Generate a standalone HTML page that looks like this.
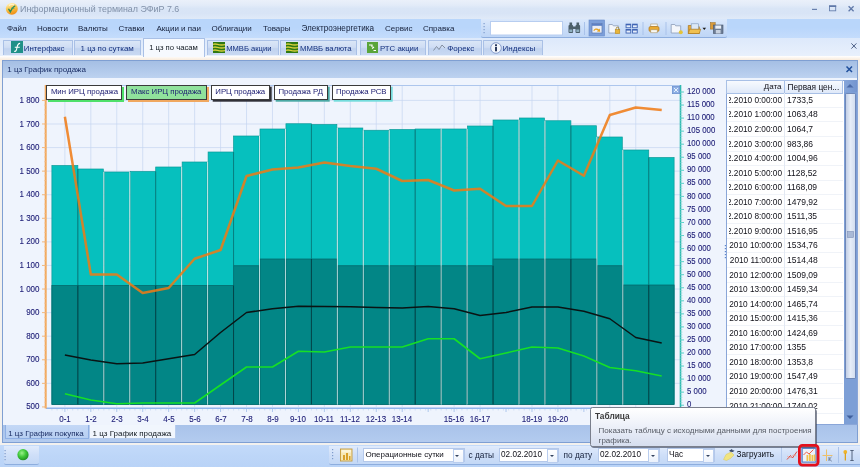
<!DOCTYPE html>
<html><head><meta charset="utf-8">
<style>
html,body{margin:0;padding:0;}
body{width:860px;height:467px;overflow:hidden;position:relative;background:#dbe7f8;font-family:"Liberation Sans",sans-serif;font-size:8px;color:#1a1a2a;}
div{position:absolute;box-sizing:border-box;white-space:nowrap;}
#title{left:0;top:0;width:860px;height:19px;background:linear-gradient(#eaf0fa 0%,#e2ebf8 28%,#d9e5f6 45%,#d8e4f6 70%,#e0eaf8 100%);}
#ttxt{left:20px;top:3.5px;font-size:8.9px;color:#8090a8;line-height:11px;}
#menu{left:0;top:19px;width:860px;height:19px;background:linear-gradient(#b9d6fb 0%,#b9d6fb 45%,#c4dcfc 100%);}
.mi{top:23.5px;font-size:8px;line-height:10px;color:#15203a;}
#tabs{left:0;top:38px;width:860px;height:18px;background:linear-gradient(#dde9fb,#e8f0fc);}
.tab{top:39.9px;height:15.6px;border:1px solid #a9c0e6;border-bottom:none;background:linear-gradient(#dae6f7 0%,#cfddf4 45%,#c1d3ef 55%,#c9d9f2 100%);border-radius:1px 1px 0 0;}
.tab span{position:absolute;top:2.8px;font-size:8px;line-height:10px;color:#15317e;}
.tab.act{top:38px;height:19px;background:#f6f9fe;border-color:#a9c0e6;z-index:3}
.tab.act span{color:#101820;top:4.2px;font-size:7.7px}
#tline{left:0;top:55.5px;width:860px;height:1px;background:#9fbbe4;}
#cream{left:0;top:56.3px;width:860px;height:389px;background:linear-gradient(#ffffff 0,#f9ede0 3.5px,#f3f1ee 6px);}
#panel{left:2px;top:59.5px;width:856px;height:383px;border:1px solid #7f9fd2;background:#eef4fd;}
#phead{left:3px;top:60.5px;width:854px;height:17.3px;background:linear-gradient(#a5bfe4 0%,#b0c8ea 50%,#bdd2f0 100%);}
#phead span{position:absolute;left:4.3px;top:4px;font-size:8px;line-height:10px;color:#1c2f66;}
#chartbg{left:3px;top:77.5px;width:722px;height:347px;background:#eff4fd;}
.yl{left:0;width:39.5px;text-align:right;font-size:8.8px;line-height:11px;color:#1a1a74;transform:scaleX(.91);transform-origin:100% 50%;-webkit-text-stroke:0.1px #1a1a74}
.yr{left:686.5px;font-size:8.8px;line-height:11px;color:#1a1a74;transform:scaleX(.89);transform-origin:0 50%;-webkit-text-stroke:0.1px #1a1a74}
.xl{top:413.5px;width:30px;text-align:center;font-size:8.8px;line-height:11px;color:#1a1a74;transform:scaleX(.91);-webkit-text-stroke:0.1px #1a1a74}
.lg{top:85px;height:14.6px;border:1px solid #3a3a3a;border-top-width:1.3px;border-left-width:1.3px;background:#fff;font-size:7.8px;line-height:12px;color:#1a1a70;text-align:center;}
#tblwrap{left:726px;top:79.5px;width:131.5px;height:345px;background:#fff;border:1px solid #8aa6d8;overflow:hidden;}
#thead{left:0;top:0;width:115px;height:13.5px;background:linear-gradient(#f4f8fe,#dbe7f8);border-bottom:1px solid #a8c0e6;}
.tr{left:727px;width:116px;height:14.5px;border-bottom:1px solid #f0f3f8;font-size:8px;line-height:13px;color:#101018;overflow:hidden;}
.c1{left:1.5px;top:0.5px;width:53.5px;overflow:hidden;height:14px;font-size:8.25px}
.c1 span{position:absolute;right:0;top:0}
.c2{left:60px;top:0.5px;font-size:8.5px}
.combo{top:448px;height:14px;background:#fff;border:1px solid #b4c8ea;font-size:8.2px;line-height:12px;color:#101018;}
.combo span{position:absolute;left:1.5px;top:0}
.combo i{position:absolute;right:0;top:0;width:9px;height:12px;background:linear-gradient(#ffffff,#eaf1fc);border:1px solid #b9cdee;}
.combo i:after{content:"";position:absolute;left:1.5px;top:4.5px;border:2px solid transparent;border-top:2.5px solid #33435f;}
.lbl{top:450px;font-size:8.3px;line-height:10px;color:#15203a;}
#w{left:0;top:0;width:860px;height:467px;will-change:transform;overflow:hidden}
</style></head><body>
<div id="w">
<!-- title -->
<div id="title"></div>
<svg style="position:absolute;left:5px;top:1.5px" width="14" height="14" viewBox="0 0 14 14"><defs><linearGradient id="og" x1="0.3" y1="0" x2="0.6" y2="1"><stop offset="0" stop-color="#fff4cc"/><stop offset="0.45" stop-color="#f9c64a"/><stop offset="1" stop-color="#ef8a10"/></linearGradient></defs><circle cx="6.8" cy="6.8" r="6" fill="url(#og)"/><path d="M3.8 7.300l1.600 2.400c1.200-2.600 2.200-4.800 4.400-5.600" stroke="#2a8a5a" stroke-width="1.400" fill="none" stroke-linecap="round"/><path d="M6.200 6.200h3.200" stroke="#3a9a6a" stroke-width="0.900"/><path d="M4 3.600c1.500-1.300 3.500-1.500 5-.8" stroke="#fffbe8" stroke-width="1" fill="none" opacity="0.800"/></svg>
<div id="ttxt">Информационный терминал ЭФиР 7.6</div>
<svg style="position:absolute;left:806px;top:2px" width="52" height="14" viewBox="0 0 52 14"><path d="M6 7.4h5" stroke="#6880ae" stroke-width="1.2"/><rect x="23.5" y="4" width="6.2" height="4.8" fill="none" stroke="#6880ae" stroke-width="0.9"/><rect x="23" y="3.4" width="7.2" height="1.6" fill="#5f78a8"/><path d="M42.6 4.2l5 5M47.6 4.2l-5 5" stroke="#5f78a8" stroke-width="1.25"/></svg>
<!-- menu -->
<div id="menu"></div>
<div class="mi" style="left:7px">Файл</div>
<div class="mi" style="left:37px">Новости</div>
<div class="mi" style="left:78px">Валюты</div>
<div class="mi" style="left:118.5px">Ставки</div>
<div class="mi" style="left:156.5px">Акции и паи</div>
<div class="mi" style="left:211.5px">Облигации</div>
<div class="mi" style="left:263px">Товары</div>
<div class="mi" style="left:301.5px;font-size:8.15px">Электроэнергетика</div>
<div class="mi" style="left:385px">Сервис</div>
<div class="mi" style="left:423px">Справка</div>
<!-- toolbar -->
<div style="left:481px;top:19px;width:246px;height:18.5px;background:linear-gradient(#dbe8fb,#c8dcf8 60%,#bfd6f6);border-bottom:1px solid #8eaede;border-radius:0 0 2px 2px"></div>
<svg style="position:absolute;left:481px;top:19px" width="246" height="19" viewBox="0 0 246 19">
<g fill="#7f9ccc"><rect x="2.5" y="4" width="1.2" height="1.2"/><rect x="2.5" y="7" width="1.2" height="1.2"/><rect x="2.5" y="10" width="1.2" height="1.2"/><rect x="2.5" y="13" width="1.2" height="1.2"/></g>
<rect x="9.5" y="2.5" width="72" height="13.5" fill="#fff" stroke="#b7cdf0" stroke-width="1"/>
<!-- binoculars -->
<g fill="#4c5f6a"><rect x="87.5" y="6" width="4.6" height="8" rx="1"/><rect x="94.5" y="6" width="4.6" height="8" rx="1"/><rect x="88.5" y="3.5" width="2.6" height="3"/><rect x="95.5" y="3.5" width="2.6" height="3"/><rect x="91.5" y="7.5" width="3.5" height="2.5"/></g>
<rect x="88.3" y="10.5" width="3" height="2.5" fill="#8fb0c0"/><rect x="95.3" y="10.5" width="3" height="2.5" fill="#8fb0c0"/>
<path d="M103.5 3v13" stroke="#a9c2ea" stroke-width="1"/>
<!-- active btn -->
<rect x="108" y="1" width="15.6" height="16" fill="#7c9fda" stroke="#6a8cc8" stroke-width="0.6"/>
<rect x="111" y="4.6" width="10" height="9.4" fill="#e9eef8" stroke="#5d78b0" stroke-width="0.7"/><rect x="111" y="4.6" width="10" height="2.2" fill="#5b7fc4"/>
<path d="M112.3 11.4c1.200-2.400 4.300-2.600 5.600-.9l.9-1.100.4 3.300-3.300-.2 1-.9c-1.100-1.300-3-.9-3.600.4z" fill="#e6a21e"/>
<!-- folder lock -->
<path d="M127.800 5.500h3.600l.9 1.300h5v7.200h-9.500z" fill="#f3f6fb" stroke="#8c9cb8" stroke-width="0.800"/><rect x="134.200" y="10.600" width="4.600" height="4" fill="#e8b53a" stroke="#b78614" stroke-width="0.500"/><path d="M135.200 10.600v-1.100a1.300 1.300 0 0 1 2.600 0v1.100" stroke="#9a7a20" stroke-width="0.800" fill="none"/>
<!-- grid -->
<g fill="#3f64b4"><rect x="144.600" y="4.700" width="5.600" height="4.500"/><rect x="151.100" y="4.700" width="5.600" height="4.500"/><rect x="144.600" y="10" width="5.600" height="4.500"/><rect x="151.100" y="10" width="5.600" height="4.500"/></g>
<g fill="#e5edfa"><rect x="145.500" y="6.300" width="3.800" height="2"/><rect x="152" y="6.300" width="3.800" height="2"/><rect x="145.500" y="11.600" width="3.800" height="2"/><rect x="152" y="11.600" width="3.800" height="2"/></g>
<path d="M162 3v13" stroke="#a9c2ea" stroke-width="1"/>
<!-- printer -->
<rect x="169.800" y="5" width="6.400" height="3" fill="#f8f8f4" stroke="#a8946a" stroke-width="0.600"/><rect x="168" y="7.500" width="10" height="5" rx="1.500" fill="#e9aa32" stroke="#b0761a" stroke-width="0.700"/><rect x="169.800" y="10.800" width="6.400" height="3" fill="#f8f8f4" stroke="#a8946a" stroke-width="0.600"/>
<path d="M185 3v13" stroke="#a9c2ea" stroke-width="1"/>
<!-- new folder -->
<path d="M190.200 5.500h3.600l.9 1.300h5v7.200h-9.500z" fill="#f3f6fb" stroke="#8c9cb8" stroke-width="0.800"/><circle cx="199.800" cy="13.200" r="2" fill="#e4c43a"/>
<!-- open folder img -->
<path d="M207.300 6.500h3.600l.9 1.300h6.500v6.700h-11z" fill="#e6a93a" stroke="#a8741a" stroke-width="0.700"/><rect x="210.200" y="4.800" width="7.200" height="5.800" fill="#dce8f6" stroke="#7f96b8" stroke-width="0.600"/><path d="M207.300 14.500l1.400-4.300h11l-1.400 4.300z" fill="#f0c050" stroke="#a8741a" stroke-width="0.600"/>
<path d="M221.500 8.800h3.600l-1.800 2.200z" fill="#1a1a1a"/>
<!-- save copy -->
<rect x="229.400" y="3.600" width="4.800" height="6.500" fill="#d89a3a" stroke="#9a6a1a" stroke-width="0.500"/><rect x="232.400" y="6" width="9.600" height="8.500" fill="#6e7e96" stroke="#48566c" stroke-width="0.600"/><rect x="234.300" y="6.500" width="5.800" height="3.200" fill="#e8eef6"/><rect x="234.800" y="11" width="4.800" height="3.500" fill="#c8d2e0"/>
</svg>
<!-- tabs -->
<div id="tabs"></div>
<div id="tline"></div>
<div class="tab" style="left:3px;width:69.500px"><svg style="position:absolute;left:7px;top:0.2px" width="12" height="12" viewBox="0 0 12 12"><rect width="12" height="12" fill="#1f9088"/><path d="M3.200 10.200c1.800.6 2.300-1 2.700-3.200s.9-4.600 3.200-4.600M3.800 6.200h5" stroke="#fff" stroke-width="1.100" fill="none"/></svg><span style="left:19.8px;font-size:7.9px">Интерфакс</span></div>
<div class="tab" style="left:74px;width:66.500px"><span style="left:5.5px">1 цз по суткам</span></div>
<div class="tab act" style="left:143px;width:61.500px;top:38px"><span style="left:5.2px">1 цз по часам</span></div>
<div class="tab" style="left:206.500px;width:72px"><svg style="position:absolute;left:5px;top:1.500px" width="12" height="11" viewBox="0 0 12 11"><rect width="12" height="11" fill="#2f7814"/><path d="M0 2.500c3-2 6 2 12 0M0 5.500c3-2 6 2 12 0M0 8.500c3-2 6 2 12 0" stroke="#d6cf3c" stroke-width="1.300" fill="none"/></svg><span style="left:18.7px;font-size:7.6px">ММВБ акции</span></div>
<div class="tab" style="left:280.3px;width:76.7px"><svg style="position:absolute;left:4.7px;top:1.500px" width="12" height="11" viewBox="0 0 12 11"><rect width="12" height="11" fill="#2f7814"/><path d="M0 2.500c3-2 6 2 12 0M0 5.500c3-2 6 2 12 0M0 8.500c3-2 6 2 12 0" stroke="#d6cf3c" stroke-width="1.300" fill="none"/></svg><span style="left:18.7px;font-size:7.75px">ММВБ валюта</span></div>
<div class="tab" style="left:360px;width:66px"><svg style="position:absolute;left:5.500px;top:1.500px" width="11" height="11" viewBox="0 0 11 11"><rect width="11" height="11" fill="#5aa53a"/><path d="M2 3h3v2M5 6.500l2-1.500M6.500 8.500h2.500" stroke="#fff" stroke-width="1.200" fill="none"/></svg><span style="left:19px;font-size:7.8px">РТС акции</span></div>
<div class="tab" style="left:428px;width:53.5px"><svg style="position:absolute;left:4px;top:3px" width="13" height="8" viewBox="0 0 13 8"><path d="M0.500 6.500l3-4 2.500 3 3-4.500 3 3" stroke="#7a8696" stroke-width="0.900" fill="none"/></svg><span style="left:18.2px">Форекс</span></div>
<div class="tab" style="left:483px;width:60px"><svg style="position:absolute;left:6px;top:1px" width="12" height="12" viewBox="0 0 12 12"><circle cx="6" cy="6" r="5.300" fill="#f4f7fc" stroke="#7f97c8" stroke-width="0.900"/><rect x="5.100" y="4.800" width="1.800" height="4.500" fill="#16264e"/><rect x="5.100" y="2.300" width="1.800" height="1.700" fill="#16264e"/></svg><span style="left:18.6px">Индексы</span></div>
<svg style="position:absolute;left:850px;top:42px" width="8" height="8" viewBox="0 0 8 8"><path d="M1.4 1.4l5 5.2M6.4 1.4L1.4 6.600" stroke="#4c5f86" stroke-width="1"/></svg>
<!-- panel -->
<div id="cream"></div>
<div id="panel"></div>
<div id="phead"><span>1 цз График продажа</span></div>
<svg style="position:absolute;left:845px;top:65px" width="9" height="9" viewBox="0 0 9 9"><path d="M1.500 1.500l5.500 5.500M7 1.500L1.500 7" stroke="#1f4f9c" stroke-width="1.500"/></svg>
<div id="chartbg"></div>
<svg width="860" height="467" viewBox="0 0 860 467" style="position:absolute;left:0;top:0">
<line x1="46" x2="680" y1="100.40" y2="100.40" stroke="#c6d5f1" stroke-width="0.7"/>
<line x1="46" x2="680" y1="123.98" y2="123.98" stroke="#c6d5f1" stroke-width="0.7"/>
<line x1="46" x2="680" y1="147.56" y2="147.56" stroke="#c6d5f1" stroke-width="0.7"/>
<line x1="46" x2="680" y1="171.14" y2="171.14" stroke="#c6d5f1" stroke-width="0.7"/>
<line x1="46" x2="680" y1="194.72" y2="194.72" stroke="#c6d5f1" stroke-width="0.7"/>
<line x1="46" x2="680" y1="218.30" y2="218.30" stroke="#c6d5f1" stroke-width="0.7"/>
<line x1="46" x2="680" y1="241.88" y2="241.88" stroke="#c6d5f1" stroke-width="0.7"/>
<line x1="46" x2="680" y1="265.46" y2="265.46" stroke="#c6d5f1" stroke-width="0.7"/>
<line x1="46" x2="680" y1="289.04" y2="289.04" stroke="#c6d5f1" stroke-width="0.7"/>
<line x1="46" x2="680" y1="312.62" y2="312.62" stroke="#c6d5f1" stroke-width="0.7"/>
<line x1="46" x2="680" y1="336.20" y2="336.20" stroke="#c6d5f1" stroke-width="0.7"/>
<line x1="46" x2="680" y1="359.78" y2="359.78" stroke="#c6d5f1" stroke-width="0.7"/>
<line x1="46" x2="680" y1="383.36" y2="383.36" stroke="#c6d5f1" stroke-width="0.7"/>
<line x1="64.88" x2="64.88" y1="86" y2="407" stroke="#c6d5f1" stroke-width="0.7"/>
<line x1="90.82" x2="90.82" y1="86" y2="407" stroke="#c6d5f1" stroke-width="0.7"/>
<line x1="116.78" x2="116.78" y1="86" y2="407" stroke="#c6d5f1" stroke-width="0.7"/>
<line x1="142.72" x2="142.72" y1="86" y2="407" stroke="#c6d5f1" stroke-width="0.7"/>
<line x1="168.67" x2="168.67" y1="86" y2="407" stroke="#c6d5f1" stroke-width="0.7"/>
<line x1="194.62" x2="194.62" y1="86" y2="407" stroke="#c6d5f1" stroke-width="0.7"/>
<line x1="220.57" x2="220.57" y1="86" y2="407" stroke="#c6d5f1" stroke-width="0.7"/>
<line x1="246.53" x2="246.53" y1="86" y2="407" stroke="#c6d5f1" stroke-width="0.7"/>
<line x1="272.47" x2="272.47" y1="86" y2="407" stroke="#c6d5f1" stroke-width="0.7"/>
<line x1="298.43" x2="298.43" y1="86" y2="407" stroke="#c6d5f1" stroke-width="0.7"/>
<line x1="324.37" x2="324.37" y1="86" y2="407" stroke="#c6d5f1" stroke-width="0.7"/>
<line x1="350.32" x2="350.32" y1="86" y2="407" stroke="#c6d5f1" stroke-width="0.7"/>
<line x1="376.27" x2="376.27" y1="86" y2="407" stroke="#c6d5f1" stroke-width="0.7"/>
<line x1="402.22" x2="402.22" y1="86" y2="407" stroke="#c6d5f1" stroke-width="0.7"/>
<line x1="454.12" x2="454.12" y1="86" y2="407" stroke="#c6d5f1" stroke-width="0.7"/>
<line x1="480.07" x2="480.07" y1="86" y2="407" stroke="#c6d5f1" stroke-width="0.7"/>
<line x1="531.98" x2="531.98" y1="86" y2="407" stroke="#c6d5f1" stroke-width="0.7"/>
<line x1="557.92" x2="557.92" y1="86" y2="407" stroke="#c6d5f1" stroke-width="0.7"/>
<line x1="609.82" x2="609.82" y1="86" y2="407" stroke="#c6d5f1" stroke-width="0.7"/>
<line x1="635.77" x2="635.77" y1="86" y2="407" stroke="#c6d5f1" stroke-width="0.7"/>
<line x1="46" x2="680" y1="85.5" y2="85.5" stroke="#adc6ed" stroke-width="1"/>
<line x1="46" x2="680" y1="408.2" y2="408.2" stroke="#8fb4ec" stroke-width="1.5"/>
<rect x="51.90" y="165.50" width="25.95" height="238.90" fill="#06c0be" stroke="#0a9a98" stroke-width="0.7"/>
<rect x="51.90" y="285.50" width="25.95" height="118.90" fill="#028686" stroke="#046264" stroke-width="0.7"/>
<rect x="77.85" y="169.00" width="25.45" height="235.40" fill="#06c0be" stroke="#0a9a98" stroke-width="0.7"/>
<rect x="77.85" y="285.50" width="25.45" height="118.90" fill="#028686" stroke="#046264" stroke-width="0.7"/>
<rect x="104.30" y="172.00" width="24.95" height="232.40" fill="#06c0be" stroke="#0a9a98" stroke-width="0.7"/>
<rect x="104.30" y="285.50" width="24.95" height="118.90" fill="#028686" stroke="#046264" stroke-width="0.7"/>
<rect x="130.25" y="171.50" width="25.45" height="232.90" fill="#06c0be" stroke="#0a9a98" stroke-width="0.7"/>
<rect x="130.25" y="285.50" width="25.45" height="118.90" fill="#028686" stroke="#046264" stroke-width="0.7"/>
<rect x="155.70" y="167.00" width="25.45" height="237.40" fill="#06c0be" stroke="#0a9a98" stroke-width="0.7"/>
<rect x="155.70" y="285.50" width="25.45" height="118.90" fill="#028686" stroke="#046264" stroke-width="0.7"/>
<rect x="182.15" y="162.00" width="24.95" height="242.40" fill="#06c0be" stroke="#0a9a98" stroke-width="0.7"/>
<rect x="182.15" y="285.50" width="24.95" height="118.90" fill="#028686" stroke="#046264" stroke-width="0.7"/>
<rect x="208.10" y="152.00" width="25.45" height="252.40" fill="#06c0be" stroke="#0a9a98" stroke-width="0.7"/>
<rect x="208.10" y="285.50" width="25.45" height="118.90" fill="#028686" stroke="#046264" stroke-width="0.7"/>
<rect x="233.55" y="136.00" width="25.45" height="268.40" fill="#06c0be" stroke="#0a9a98" stroke-width="0.7"/>
<rect x="233.55" y="265.75" width="25.45" height="138.65" fill="#028686" stroke="#046264" stroke-width="0.7"/>
<rect x="260.00" y="129.00" width="24.95" height="275.40" fill="#06c0be" stroke="#0a9a98" stroke-width="0.7"/>
<rect x="260.00" y="259.00" width="24.95" height="145.40" fill="#028686" stroke="#046264" stroke-width="0.7"/>
<rect x="285.95" y="123.75" width="25.45" height="280.65" fill="#06c0be" stroke="#0a9a98" stroke-width="0.7"/>
<rect x="285.95" y="259.00" width="25.45" height="145.40" fill="#028686" stroke="#046264" stroke-width="0.7"/>
<rect x="311.40" y="124.50" width="25.45" height="279.90" fill="#06c0be" stroke="#0a9a98" stroke-width="0.7"/>
<rect x="311.40" y="259.00" width="25.45" height="145.40" fill="#028686" stroke="#046264" stroke-width="0.7"/>
<rect x="337.85" y="128.00" width="24.95" height="276.40" fill="#06c0be" stroke="#0a9a98" stroke-width="0.7"/>
<rect x="337.85" y="265.75" width="24.95" height="138.65" fill="#028686" stroke="#046264" stroke-width="0.7"/>
<rect x="363.80" y="130.25" width="24.95" height="274.15" fill="#06c0be" stroke="#0a9a98" stroke-width="0.7"/>
<rect x="363.80" y="265.75" width="24.95" height="138.65" fill="#028686" stroke="#046264" stroke-width="0.7"/>
<rect x="389.75" y="129.50" width="25.45" height="274.90" fill="#06c0be" stroke="#0a9a98" stroke-width="0.7"/>
<rect x="389.75" y="265.75" width="25.45" height="138.65" fill="#028686" stroke="#046264" stroke-width="0.7"/>
<rect x="415.20" y="129.00" width="25.45" height="275.40" fill="#06c0be" stroke="#0a9a98" stroke-width="0.7"/>
<rect x="415.20" y="265.75" width="25.45" height="138.65" fill="#028686" stroke="#046264" stroke-width="0.7"/>
<rect x="441.65" y="129.00" width="24.95" height="275.40" fill="#06c0be" stroke="#0a9a98" stroke-width="0.7"/>
<rect x="441.65" y="265.75" width="24.95" height="138.65" fill="#028686" stroke="#046264" stroke-width="0.7"/>
<rect x="467.60" y="126.00" width="25.45" height="278.40" fill="#06c0be" stroke="#0a9a98" stroke-width="0.7"/>
<rect x="467.60" y="265.75" width="25.45" height="138.65" fill="#028686" stroke="#046264" stroke-width="0.7"/>
<rect x="493.05" y="120.00" width="25.45" height="284.40" fill="#06c0be" stroke="#0a9a98" stroke-width="0.7"/>
<rect x="493.05" y="259.00" width="25.45" height="145.40" fill="#028686" stroke="#046264" stroke-width="0.7"/>
<rect x="519.50" y="118.00" width="24.95" height="286.40" fill="#06c0be" stroke="#0a9a98" stroke-width="0.7"/>
<rect x="519.50" y="259.00" width="24.95" height="145.40" fill="#028686" stroke="#046264" stroke-width="0.7"/>
<rect x="545.45" y="120.75" width="25.45" height="283.65" fill="#06c0be" stroke="#0a9a98" stroke-width="0.7"/>
<rect x="545.45" y="259.00" width="25.45" height="145.40" fill="#028686" stroke="#046264" stroke-width="0.7"/>
<rect x="570.90" y="125.75" width="25.45" height="278.65" fill="#06c0be" stroke="#0a9a98" stroke-width="0.7"/>
<rect x="570.90" y="259.00" width="25.45" height="145.40" fill="#028686" stroke="#046264" stroke-width="0.7"/>
<rect x="597.35" y="137.00" width="24.95" height="267.40" fill="#06c0be" stroke="#0a9a98" stroke-width="0.7"/>
<rect x="597.35" y="265.75" width="24.95" height="138.65" fill="#028686" stroke="#046264" stroke-width="0.7"/>
<rect x="623.30" y="150.00" width="25.45" height="254.40" fill="#06c0be" stroke="#0a9a98" stroke-width="0.7"/>
<rect x="623.30" y="285.00" width="25.45" height="119.40" fill="#028686" stroke="#046264" stroke-width="0.7"/>
<rect x="648.75" y="157.50" width="25.35" height="246.90" fill="#06c0be" stroke="#0a9a98" stroke-width="0.7"/>
<rect x="648.75" y="285.00" width="25.35" height="119.40" fill="#028686" stroke="#046264" stroke-width="0.7"/>
<line x1="77.85" x2="77.85" y1="169.00" y2="285.5" stroke="#067c7e" stroke-width="0.9"/>
<line x1="77.85" x2="77.85" y1="285.50" y2="404.4" stroke="#033f44" stroke-width="0.9"/>
<line x1="103.80" x2="103.80" y1="172.00" y2="404.4" stroke="#e4f6f4" stroke-width="0.75"/>
<line x1="129.75" x2="129.75" y1="172.00" y2="404.4" stroke="#e4f6f4" stroke-width="0.75"/>
<line x1="155.70" x2="155.70" y1="171.50" y2="285.5" stroke="#067c7e" stroke-width="0.9"/>
<line x1="155.70" x2="155.70" y1="285.50" y2="404.4" stroke="#033f44" stroke-width="0.9"/>
<line x1="181.65" x2="181.65" y1="167.00" y2="404.4" stroke="#e4f6f4" stroke-width="0.75"/>
<line x1="207.60" x2="207.60" y1="162.00" y2="404.4" stroke="#e4f6f4" stroke-width="0.75"/>
<line x1="233.55" x2="233.55" y1="152.00" y2="285.5" stroke="#067c7e" stroke-width="0.9"/>
<line x1="233.55" x2="233.55" y1="285.50" y2="404.4" stroke="#033f44" stroke-width="0.9"/>
<line x1="259.50" x2="259.50" y1="136.00" y2="404.4" stroke="#e4f6f4" stroke-width="0.75"/>
<line x1="285.45" x2="285.45" y1="129.00" y2="404.4" stroke="#e4f6f4" stroke-width="0.75"/>
<line x1="311.40" x2="311.40" y1="124.50" y2="259" stroke="#067c7e" stroke-width="0.9"/>
<line x1="311.40" x2="311.40" y1="259.00" y2="404.4" stroke="#033f44" stroke-width="0.9"/>
<line x1="337.35" x2="337.35" y1="128.00" y2="404.4" stroke="#e4f6f4" stroke-width="0.75"/>
<line x1="363.30" x2="363.30" y1="130.25" y2="404.4" stroke="#e4f6f4" stroke-width="0.75"/>
<line x1="389.25" x2="389.25" y1="130.25" y2="404.4" stroke="#e4f6f4" stroke-width="0.75"/>
<line x1="415.20" x2="415.20" y1="129.50" y2="265.75" stroke="#067c7e" stroke-width="0.9"/>
<line x1="415.20" x2="415.20" y1="265.75" y2="404.4" stroke="#033f44" stroke-width="0.9"/>
<line x1="441.15" x2="441.15" y1="129.00" y2="404.4" stroke="#e4f6f4" stroke-width="0.75"/>
<line x1="467.10" x2="467.10" y1="129.00" y2="404.4" stroke="#e4f6f4" stroke-width="0.75"/>
<line x1="493.05" x2="493.05" y1="126.00" y2="265.75" stroke="#067c7e" stroke-width="0.9"/>
<line x1="493.05" x2="493.05" y1="265.75" y2="404.4" stroke="#033f44" stroke-width="0.9"/>
<line x1="519.00" x2="519.00" y1="120.00" y2="404.4" stroke="#e4f6f4" stroke-width="0.75"/>
<line x1="544.95" x2="544.95" y1="120.75" y2="404.4" stroke="#e4f6f4" stroke-width="0.75"/>
<line x1="570.90" x2="570.90" y1="125.75" y2="259" stroke="#067c7e" stroke-width="0.9"/>
<line x1="570.90" x2="570.90" y1="259.00" y2="404.4" stroke="#033f44" stroke-width="0.9"/>
<line x1="596.85" x2="596.85" y1="137.00" y2="404.4" stroke="#e4f6f4" stroke-width="0.75"/>
<line x1="622.80" x2="622.80" y1="150.00" y2="404.4" stroke="#e4f6f4" stroke-width="0.75"/>
<line x1="648.75" x2="648.75" y1="157.50" y2="285" stroke="#067c7e" stroke-width="0.9"/>
<line x1="648.75" x2="648.75" y1="285.00" y2="404.4" stroke="#033f44" stroke-width="0.9"/>
<polyline points="64.88,116.75 90.82,274.50 116.78,274.50 142.72,293.00 168.67,288.00 194.62,258.75 220.57,250.00 246.53,176.00 272.47,169.50 298.43,167.50 324.37,162.50 350.32,166.00 376.27,168.75 402.22,181.00 428.17,180.00 454.12,190.50 480.07,188.75 506.02,206.00 531.98,206.00 557.92,160.50 583.88,175.75 609.82,115.00 635.77,107.50 661.72,110.00" fill="none" stroke="#f07a14" stroke-width="2.5" stroke-linejoin="round" stroke-linecap="butt" opacity="0.86"/>
<polyline points="64.88,355.00 90.82,360.00 116.78,363.75 142.72,363.00 168.67,358.75 194.62,354.50 220.57,332.50 246.53,312.50 272.47,308.75 298.43,306.25 324.37,306.50 350.32,306.75 376.27,307.50 402.22,308.00 428.17,306.50 454.12,308.75 480.07,315.50 506.02,312.50 531.98,307.00 557.92,307.00 583.88,311.25 609.82,318.75 635.77,337.50 661.72,343.00" fill="none" stroke="#0a1414" stroke-width="1.5" stroke-linejoin="round" stroke-linecap="butt" opacity="1"/>
<polyline points="64.88,393.75 90.82,400.00 116.78,403.75 142.72,403.00 168.67,403.00 194.62,403.00 220.57,385.00 246.53,367.00 272.47,367.00 298.43,351.25 324.37,352.00 350.32,347.00 376.27,347.00 402.22,347.00 428.17,338.75 454.12,338.75 480.07,358.75 506.02,353.00 531.98,347.00 557.92,348.00 583.88,356.00 609.82,367.50 635.77,370.75 661.72,376.00" fill="none" stroke="#16e026" stroke-width="1.6" stroke-linejoin="round" stroke-linecap="butt" opacity="1"/>
<line x1="45.7" x2="45.7" y1="85" y2="408.5" stroke="#f2a95e" stroke-width="2"/>
<line x1="42" x2="46" y1="100.40" y2="100.40" stroke="#f0a860" stroke-width="0.8"/>
<line x1="42" x2="46" y1="123.98" y2="123.98" stroke="#f0a860" stroke-width="0.8"/>
<line x1="42" x2="46" y1="147.56" y2="147.56" stroke="#f0a860" stroke-width="0.8"/>
<line x1="42" x2="46" y1="171.14" y2="171.14" stroke="#f0a860" stroke-width="0.8"/>
<line x1="42" x2="46" y1="194.72" y2="194.72" stroke="#f0a860" stroke-width="0.8"/>
<line x1="42" x2="46" y1="218.30" y2="218.30" stroke="#f0a860" stroke-width="0.8"/>
<line x1="42" x2="46" y1="241.88" y2="241.88" stroke="#f0a860" stroke-width="0.8"/>
<line x1="42" x2="46" y1="265.46" y2="265.46" stroke="#f0a860" stroke-width="0.8"/>
<line x1="42" x2="46" y1="289.04" y2="289.04" stroke="#f0a860" stroke-width="0.8"/>
<line x1="42" x2="46" y1="312.62" y2="312.62" stroke="#f0a860" stroke-width="0.8"/>
<line x1="42" x2="46" y1="336.20" y2="336.20" stroke="#f0a860" stroke-width="0.8"/>
<line x1="42" x2="46" y1="359.78" y2="359.78" stroke="#f0a860" stroke-width="0.8"/>
<line x1="42" x2="46" y1="383.36" y2="383.36" stroke="#f0a860" stroke-width="0.8"/>
<line x1="42" x2="46" y1="406.94" y2="406.94" stroke="#f0a860" stroke-width="0.8"/>
<line x1="44" x2="46" y1="100.40" y2="100.40" stroke="#f4c090" stroke-width="0.6"/>
<line x1="44" x2="46" y1="105.12" y2="105.12" stroke="#f4c090" stroke-width="0.6"/>
<line x1="44" x2="46" y1="109.83" y2="109.83" stroke="#f4c090" stroke-width="0.6"/>
<line x1="44" x2="46" y1="114.55" y2="114.55" stroke="#f4c090" stroke-width="0.6"/>
<line x1="44" x2="46" y1="119.26" y2="119.26" stroke="#f4c090" stroke-width="0.6"/>
<line x1="44" x2="46" y1="123.98" y2="123.98" stroke="#f4c090" stroke-width="0.6"/>
<line x1="44" x2="46" y1="128.70" y2="128.70" stroke="#f4c090" stroke-width="0.6"/>
<line x1="44" x2="46" y1="133.41" y2="133.41" stroke="#f4c090" stroke-width="0.6"/>
<line x1="44" x2="46" y1="138.13" y2="138.13" stroke="#f4c090" stroke-width="0.6"/>
<line x1="44" x2="46" y1="142.84" y2="142.84" stroke="#f4c090" stroke-width="0.6"/>
<line x1="44" x2="46" y1="147.56" y2="147.56" stroke="#f4c090" stroke-width="0.6"/>
<line x1="44" x2="46" y1="152.28" y2="152.28" stroke="#f4c090" stroke-width="0.6"/>
<line x1="44" x2="46" y1="156.99" y2="156.99" stroke="#f4c090" stroke-width="0.6"/>
<line x1="44" x2="46" y1="161.71" y2="161.71" stroke="#f4c090" stroke-width="0.6"/>
<line x1="44" x2="46" y1="166.42" y2="166.42" stroke="#f4c090" stroke-width="0.6"/>
<line x1="44" x2="46" y1="171.14" y2="171.14" stroke="#f4c090" stroke-width="0.6"/>
<line x1="44" x2="46" y1="175.86" y2="175.86" stroke="#f4c090" stroke-width="0.6"/>
<line x1="44" x2="46" y1="180.57" y2="180.57" stroke="#f4c090" stroke-width="0.6"/>
<line x1="44" x2="46" y1="185.29" y2="185.29" stroke="#f4c090" stroke-width="0.6"/>
<line x1="44" x2="46" y1="190.00" y2="190.00" stroke="#f4c090" stroke-width="0.6"/>
<line x1="44" x2="46" y1="194.72" y2="194.72" stroke="#f4c090" stroke-width="0.6"/>
<line x1="44" x2="46" y1="199.44" y2="199.44" stroke="#f4c090" stroke-width="0.6"/>
<line x1="44" x2="46" y1="204.15" y2="204.15" stroke="#f4c090" stroke-width="0.6"/>
<line x1="44" x2="46" y1="208.87" y2="208.87" stroke="#f4c090" stroke-width="0.6"/>
<line x1="44" x2="46" y1="213.58" y2="213.58" stroke="#f4c090" stroke-width="0.6"/>
<line x1="44" x2="46" y1="218.30" y2="218.30" stroke="#f4c090" stroke-width="0.6"/>
<line x1="44" x2="46" y1="223.02" y2="223.02" stroke="#f4c090" stroke-width="0.6"/>
<line x1="44" x2="46" y1="227.73" y2="227.73" stroke="#f4c090" stroke-width="0.6"/>
<line x1="44" x2="46" y1="232.45" y2="232.45" stroke="#f4c090" stroke-width="0.6"/>
<line x1="44" x2="46" y1="237.16" y2="237.16" stroke="#f4c090" stroke-width="0.6"/>
<line x1="44" x2="46" y1="241.88" y2="241.88" stroke="#f4c090" stroke-width="0.6"/>
<line x1="44" x2="46" y1="246.60" y2="246.60" stroke="#f4c090" stroke-width="0.6"/>
<line x1="44" x2="46" y1="251.31" y2="251.31" stroke="#f4c090" stroke-width="0.6"/>
<line x1="44" x2="46" y1="256.03" y2="256.03" stroke="#f4c090" stroke-width="0.6"/>
<line x1="44" x2="46" y1="260.74" y2="260.74" stroke="#f4c090" stroke-width="0.6"/>
<line x1="44" x2="46" y1="265.46" y2="265.46" stroke="#f4c090" stroke-width="0.6"/>
<line x1="44" x2="46" y1="270.18" y2="270.18" stroke="#f4c090" stroke-width="0.6"/>
<line x1="44" x2="46" y1="274.89" y2="274.89" stroke="#f4c090" stroke-width="0.6"/>
<line x1="44" x2="46" y1="279.61" y2="279.61" stroke="#f4c090" stroke-width="0.6"/>
<line x1="44" x2="46" y1="284.32" y2="284.32" stroke="#f4c090" stroke-width="0.6"/>
<line x1="44" x2="46" y1="289.04" y2="289.04" stroke="#f4c090" stroke-width="0.6"/>
<line x1="44" x2="46" y1="293.76" y2="293.76" stroke="#f4c090" stroke-width="0.6"/>
<line x1="44" x2="46" y1="298.47" y2="298.47" stroke="#f4c090" stroke-width="0.6"/>
<line x1="44" x2="46" y1="303.19" y2="303.19" stroke="#f4c090" stroke-width="0.6"/>
<line x1="44" x2="46" y1="307.90" y2="307.90" stroke="#f4c090" stroke-width="0.6"/>
<line x1="44" x2="46" y1="312.62" y2="312.62" stroke="#f4c090" stroke-width="0.6"/>
<line x1="44" x2="46" y1="317.34" y2="317.34" stroke="#f4c090" stroke-width="0.6"/>
<line x1="44" x2="46" y1="322.05" y2="322.05" stroke="#f4c090" stroke-width="0.6"/>
<line x1="44" x2="46" y1="326.77" y2="326.77" stroke="#f4c090" stroke-width="0.6"/>
<line x1="44" x2="46" y1="331.48" y2="331.48" stroke="#f4c090" stroke-width="0.6"/>
<line x1="44" x2="46" y1="336.20" y2="336.20" stroke="#f4c090" stroke-width="0.6"/>
<line x1="44" x2="46" y1="340.92" y2="340.92" stroke="#f4c090" stroke-width="0.6"/>
<line x1="44" x2="46" y1="345.63" y2="345.63" stroke="#f4c090" stroke-width="0.6"/>
<line x1="44" x2="46" y1="350.35" y2="350.35" stroke="#f4c090" stroke-width="0.6"/>
<line x1="44" x2="46" y1="355.06" y2="355.06" stroke="#f4c090" stroke-width="0.6"/>
<line x1="44" x2="46" y1="359.78" y2="359.78" stroke="#f4c090" stroke-width="0.6"/>
<line x1="44" x2="46" y1="364.50" y2="364.50" stroke="#f4c090" stroke-width="0.6"/>
<line x1="44" x2="46" y1="369.21" y2="369.21" stroke="#f4c090" stroke-width="0.6"/>
<line x1="44" x2="46" y1="373.93" y2="373.93" stroke="#f4c090" stroke-width="0.6"/>
<line x1="44" x2="46" y1="378.64" y2="378.64" stroke="#f4c090" stroke-width="0.6"/>
<line x1="44" x2="46" y1="383.36" y2="383.36" stroke="#f4c090" stroke-width="0.6"/>
<line x1="44" x2="46" y1="388.08" y2="388.08" stroke="#f4c090" stroke-width="0.6"/>
<line x1="44" x2="46" y1="392.79" y2="392.79" stroke="#f4c090" stroke-width="0.6"/>
<line x1="44" x2="46" y1="397.51" y2="397.51" stroke="#f4c090" stroke-width="0.6"/>
<line x1="44" x2="46" y1="402.22" y2="402.22" stroke="#f4c090" stroke-width="0.6"/>
<line x1="44" x2="46" y1="406.94" y2="406.94" stroke="#f4c090" stroke-width="0.6"/>
<line x1="680.5" x2="680.5" y1="85" y2="408" stroke="#30b8b0" stroke-width="1.6"/>
<line x1="680" x2="684" y1="92.00" y2="92.00" stroke="#36c6bc" stroke-width="0.8"/>
<line x1="680" x2="684" y1="105.05" y2="105.05" stroke="#36c6bc" stroke-width="0.8"/>
<line x1="680" x2="684" y1="118.10" y2="118.10" stroke="#36c6bc" stroke-width="0.8"/>
<line x1="680" x2="684" y1="131.15" y2="131.15" stroke="#36c6bc" stroke-width="0.8"/>
<line x1="680" x2="684" y1="144.20" y2="144.20" stroke="#36c6bc" stroke-width="0.8"/>
<line x1="680" x2="684" y1="157.25" y2="157.25" stroke="#36c6bc" stroke-width="0.8"/>
<line x1="680" x2="684" y1="170.30" y2="170.30" stroke="#36c6bc" stroke-width="0.8"/>
<line x1="680" x2="684" y1="183.35" y2="183.35" stroke="#36c6bc" stroke-width="0.8"/>
<line x1="680" x2="684" y1="196.40" y2="196.40" stroke="#36c6bc" stroke-width="0.8"/>
<line x1="680" x2="684" y1="209.45" y2="209.45" stroke="#36c6bc" stroke-width="0.8"/>
<line x1="680" x2="684" y1="222.50" y2="222.50" stroke="#36c6bc" stroke-width="0.8"/>
<line x1="680" x2="684" y1="235.55" y2="235.55" stroke="#36c6bc" stroke-width="0.8"/>
<line x1="680" x2="684" y1="248.60" y2="248.60" stroke="#36c6bc" stroke-width="0.8"/>
<line x1="680" x2="684" y1="261.65" y2="261.65" stroke="#36c6bc" stroke-width="0.8"/>
<line x1="680" x2="684" y1="274.70" y2="274.70" stroke="#36c6bc" stroke-width="0.8"/>
<line x1="680" x2="684" y1="287.75" y2="287.75" stroke="#36c6bc" stroke-width="0.8"/>
<line x1="680" x2="684" y1="300.80" y2="300.80" stroke="#36c6bc" stroke-width="0.8"/>
<line x1="680" x2="684" y1="313.85" y2="313.85" stroke="#36c6bc" stroke-width="0.8"/>
<line x1="680" x2="684" y1="326.90" y2="326.90" stroke="#36c6bc" stroke-width="0.8"/>
<line x1="680" x2="684" y1="339.95" y2="339.95" stroke="#36c6bc" stroke-width="0.8"/>
<line x1="680" x2="684" y1="353.00" y2="353.00" stroke="#36c6bc" stroke-width="0.8"/>
<line x1="680" x2="684" y1="366.05" y2="366.05" stroke="#36c6bc" stroke-width="0.8"/>
<line x1="680" x2="684" y1="379.10" y2="379.10" stroke="#36c6bc" stroke-width="0.8"/>
<line x1="680" x2="684" y1="392.15" y2="392.15" stroke="#36c6bc" stroke-width="0.8"/>
<line x1="680" x2="684" y1="405.20" y2="405.20" stroke="#36c6bc" stroke-width="0.8"/>
<line x1="680" x2="682.5" y1="92.00" y2="92.00" stroke="#7fdcd4" stroke-width="0.5"/>
<line x1="680" x2="682.5" y1="94.61" y2="94.61" stroke="#7fdcd4" stroke-width="0.5"/>
<line x1="680" x2="682.5" y1="97.22" y2="97.22" stroke="#7fdcd4" stroke-width="0.5"/>
<line x1="680" x2="682.5" y1="99.83" y2="99.83" stroke="#7fdcd4" stroke-width="0.5"/>
<line x1="680" x2="682.5" y1="102.44" y2="102.44" stroke="#7fdcd4" stroke-width="0.5"/>
<line x1="680" x2="682.5" y1="105.05" y2="105.05" stroke="#7fdcd4" stroke-width="0.5"/>
<line x1="680" x2="682.5" y1="107.66" y2="107.66" stroke="#7fdcd4" stroke-width="0.5"/>
<line x1="680" x2="682.5" y1="110.27" y2="110.27" stroke="#7fdcd4" stroke-width="0.5"/>
<line x1="680" x2="682.5" y1="112.88" y2="112.88" stroke="#7fdcd4" stroke-width="0.5"/>
<line x1="680" x2="682.5" y1="115.49" y2="115.49" stroke="#7fdcd4" stroke-width="0.5"/>
<line x1="680" x2="682.5" y1="118.10" y2="118.10" stroke="#7fdcd4" stroke-width="0.5"/>
<line x1="680" x2="682.5" y1="120.71" y2="120.71" stroke="#7fdcd4" stroke-width="0.5"/>
<line x1="680" x2="682.5" y1="123.32" y2="123.32" stroke="#7fdcd4" stroke-width="0.5"/>
<line x1="680" x2="682.5" y1="125.93" y2="125.93" stroke="#7fdcd4" stroke-width="0.5"/>
<line x1="680" x2="682.5" y1="128.54" y2="128.54" stroke="#7fdcd4" stroke-width="0.5"/>
<line x1="680" x2="682.5" y1="131.15" y2="131.15" stroke="#7fdcd4" stroke-width="0.5"/>
<line x1="680" x2="682.5" y1="133.76" y2="133.76" stroke="#7fdcd4" stroke-width="0.5"/>
<line x1="680" x2="682.5" y1="136.37" y2="136.37" stroke="#7fdcd4" stroke-width="0.5"/>
<line x1="680" x2="682.5" y1="138.98" y2="138.98" stroke="#7fdcd4" stroke-width="0.5"/>
<line x1="680" x2="682.5" y1="141.59" y2="141.59" stroke="#7fdcd4" stroke-width="0.5"/>
<line x1="680" x2="682.5" y1="144.20" y2="144.20" stroke="#7fdcd4" stroke-width="0.5"/>
<line x1="680" x2="682.5" y1="146.81" y2="146.81" stroke="#7fdcd4" stroke-width="0.5"/>
<line x1="680" x2="682.5" y1="149.42" y2="149.42" stroke="#7fdcd4" stroke-width="0.5"/>
<line x1="680" x2="682.5" y1="152.03" y2="152.03" stroke="#7fdcd4" stroke-width="0.5"/>
<line x1="680" x2="682.5" y1="154.64" y2="154.64" stroke="#7fdcd4" stroke-width="0.5"/>
<line x1="680" x2="682.5" y1="157.25" y2="157.25" stroke="#7fdcd4" stroke-width="0.5"/>
<line x1="680" x2="682.5" y1="159.86" y2="159.86" stroke="#7fdcd4" stroke-width="0.5"/>
<line x1="680" x2="682.5" y1="162.47" y2="162.47" stroke="#7fdcd4" stroke-width="0.5"/>
<line x1="680" x2="682.5" y1="165.08" y2="165.08" stroke="#7fdcd4" stroke-width="0.5"/>
<line x1="680" x2="682.5" y1="167.69" y2="167.69" stroke="#7fdcd4" stroke-width="0.5"/>
<line x1="680" x2="682.5" y1="170.30" y2="170.30" stroke="#7fdcd4" stroke-width="0.5"/>
<line x1="680" x2="682.5" y1="172.91" y2="172.91" stroke="#7fdcd4" stroke-width="0.5"/>
<line x1="680" x2="682.5" y1="175.52" y2="175.52" stroke="#7fdcd4" stroke-width="0.5"/>
<line x1="680" x2="682.5" y1="178.13" y2="178.13" stroke="#7fdcd4" stroke-width="0.5"/>
<line x1="680" x2="682.5" y1="180.74" y2="180.74" stroke="#7fdcd4" stroke-width="0.5"/>
<line x1="680" x2="682.5" y1="183.35" y2="183.35" stroke="#7fdcd4" stroke-width="0.5"/>
<line x1="680" x2="682.5" y1="185.96" y2="185.96" stroke="#7fdcd4" stroke-width="0.5"/>
<line x1="680" x2="682.5" y1="188.57" y2="188.57" stroke="#7fdcd4" stroke-width="0.5"/>
<line x1="680" x2="682.5" y1="191.18" y2="191.18" stroke="#7fdcd4" stroke-width="0.5"/>
<line x1="680" x2="682.5" y1="193.79" y2="193.79" stroke="#7fdcd4" stroke-width="0.5"/>
<line x1="680" x2="682.5" y1="196.40" y2="196.40" stroke="#7fdcd4" stroke-width="0.5"/>
<line x1="680" x2="682.5" y1="199.01" y2="199.01" stroke="#7fdcd4" stroke-width="0.5"/>
<line x1="680" x2="682.5" y1="201.62" y2="201.62" stroke="#7fdcd4" stroke-width="0.5"/>
<line x1="680" x2="682.5" y1="204.23" y2="204.23" stroke="#7fdcd4" stroke-width="0.5"/>
<line x1="680" x2="682.5" y1="206.84" y2="206.84" stroke="#7fdcd4" stroke-width="0.5"/>
<line x1="680" x2="682.5" y1="209.45" y2="209.45" stroke="#7fdcd4" stroke-width="0.5"/>
<line x1="680" x2="682.5" y1="212.06" y2="212.06" stroke="#7fdcd4" stroke-width="0.5"/>
<line x1="680" x2="682.5" y1="214.67" y2="214.67" stroke="#7fdcd4" stroke-width="0.5"/>
<line x1="680" x2="682.5" y1="217.28" y2="217.28" stroke="#7fdcd4" stroke-width="0.5"/>
<line x1="680" x2="682.5" y1="219.89" y2="219.89" stroke="#7fdcd4" stroke-width="0.5"/>
<line x1="680" x2="682.5" y1="222.50" y2="222.50" stroke="#7fdcd4" stroke-width="0.5"/>
<line x1="680" x2="682.5" y1="225.11" y2="225.11" stroke="#7fdcd4" stroke-width="0.5"/>
<line x1="680" x2="682.5" y1="227.72" y2="227.72" stroke="#7fdcd4" stroke-width="0.5"/>
<line x1="680" x2="682.5" y1="230.33" y2="230.33" stroke="#7fdcd4" stroke-width="0.5"/>
<line x1="680" x2="682.5" y1="232.94" y2="232.94" stroke="#7fdcd4" stroke-width="0.5"/>
<line x1="680" x2="682.5" y1="235.55" y2="235.55" stroke="#7fdcd4" stroke-width="0.5"/>
<line x1="680" x2="682.5" y1="238.16" y2="238.16" stroke="#7fdcd4" stroke-width="0.5"/>
<line x1="680" x2="682.5" y1="240.77" y2="240.77" stroke="#7fdcd4" stroke-width="0.5"/>
<line x1="680" x2="682.5" y1="243.38" y2="243.38" stroke="#7fdcd4" stroke-width="0.5"/>
<line x1="680" x2="682.5" y1="245.99" y2="245.99" stroke="#7fdcd4" stroke-width="0.5"/>
<line x1="680" x2="682.5" y1="248.60" y2="248.60" stroke="#7fdcd4" stroke-width="0.5"/>
<line x1="680" x2="682.5" y1="251.21" y2="251.21" stroke="#7fdcd4" stroke-width="0.5"/>
<line x1="680" x2="682.5" y1="253.82" y2="253.82" stroke="#7fdcd4" stroke-width="0.5"/>
<line x1="680" x2="682.5" y1="256.43" y2="256.43" stroke="#7fdcd4" stroke-width="0.5"/>
<line x1="680" x2="682.5" y1="259.04" y2="259.04" stroke="#7fdcd4" stroke-width="0.5"/>
<line x1="680" x2="682.5" y1="261.65" y2="261.65" stroke="#7fdcd4" stroke-width="0.5"/>
<line x1="680" x2="682.5" y1="264.26" y2="264.26" stroke="#7fdcd4" stroke-width="0.5"/>
<line x1="680" x2="682.5" y1="266.87" y2="266.87" stroke="#7fdcd4" stroke-width="0.5"/>
<line x1="680" x2="682.5" y1="269.48" y2="269.48" stroke="#7fdcd4" stroke-width="0.5"/>
<line x1="680" x2="682.5" y1="272.09" y2="272.09" stroke="#7fdcd4" stroke-width="0.5"/>
<line x1="680" x2="682.5" y1="274.70" y2="274.70" stroke="#7fdcd4" stroke-width="0.5"/>
<line x1="680" x2="682.5" y1="277.31" y2="277.31" stroke="#7fdcd4" stroke-width="0.5"/>
<line x1="680" x2="682.5" y1="279.92" y2="279.92" stroke="#7fdcd4" stroke-width="0.5"/>
<line x1="680" x2="682.5" y1="282.53" y2="282.53" stroke="#7fdcd4" stroke-width="0.5"/>
<line x1="680" x2="682.5" y1="285.14" y2="285.14" stroke="#7fdcd4" stroke-width="0.5"/>
<line x1="680" x2="682.5" y1="287.75" y2="287.75" stroke="#7fdcd4" stroke-width="0.5"/>
<line x1="680" x2="682.5" y1="290.36" y2="290.36" stroke="#7fdcd4" stroke-width="0.5"/>
<line x1="680" x2="682.5" y1="292.97" y2="292.97" stroke="#7fdcd4" stroke-width="0.5"/>
<line x1="680" x2="682.5" y1="295.58" y2="295.58" stroke="#7fdcd4" stroke-width="0.5"/>
<line x1="680" x2="682.5" y1="298.19" y2="298.19" stroke="#7fdcd4" stroke-width="0.5"/>
<line x1="680" x2="682.5" y1="300.80" y2="300.80" stroke="#7fdcd4" stroke-width="0.5"/>
<line x1="680" x2="682.5" y1="303.41" y2="303.41" stroke="#7fdcd4" stroke-width="0.5"/>
<line x1="680" x2="682.5" y1="306.02" y2="306.02" stroke="#7fdcd4" stroke-width="0.5"/>
<line x1="680" x2="682.5" y1="308.63" y2="308.63" stroke="#7fdcd4" stroke-width="0.5"/>
<line x1="680" x2="682.5" y1="311.24" y2="311.24" stroke="#7fdcd4" stroke-width="0.5"/>
<line x1="680" x2="682.5" y1="313.85" y2="313.85" stroke="#7fdcd4" stroke-width="0.5"/>
<line x1="680" x2="682.5" y1="316.46" y2="316.46" stroke="#7fdcd4" stroke-width="0.5"/>
<line x1="680" x2="682.5" y1="319.07" y2="319.07" stroke="#7fdcd4" stroke-width="0.5"/>
<line x1="680" x2="682.5" y1="321.68" y2="321.68" stroke="#7fdcd4" stroke-width="0.5"/>
<line x1="680" x2="682.5" y1="324.29" y2="324.29" stroke="#7fdcd4" stroke-width="0.5"/>
<line x1="680" x2="682.5" y1="326.90" y2="326.90" stroke="#7fdcd4" stroke-width="0.5"/>
<line x1="680" x2="682.5" y1="329.51" y2="329.51" stroke="#7fdcd4" stroke-width="0.5"/>
<line x1="680" x2="682.5" y1="332.12" y2="332.12" stroke="#7fdcd4" stroke-width="0.5"/>
<line x1="680" x2="682.5" y1="334.73" y2="334.73" stroke="#7fdcd4" stroke-width="0.5"/>
<line x1="680" x2="682.5" y1="337.34" y2="337.34" stroke="#7fdcd4" stroke-width="0.5"/>
<line x1="680" x2="682.5" y1="339.95" y2="339.95" stroke="#7fdcd4" stroke-width="0.5"/>
<line x1="680" x2="682.5" y1="342.56" y2="342.56" stroke="#7fdcd4" stroke-width="0.5"/>
<line x1="680" x2="682.5" y1="345.17" y2="345.17" stroke="#7fdcd4" stroke-width="0.5"/>
<line x1="680" x2="682.5" y1="347.78" y2="347.78" stroke="#7fdcd4" stroke-width="0.5"/>
<line x1="680" x2="682.5" y1="350.39" y2="350.39" stroke="#7fdcd4" stroke-width="0.5"/>
<line x1="680" x2="682.5" y1="353.00" y2="353.00" stroke="#7fdcd4" stroke-width="0.5"/>
<line x1="680" x2="682.5" y1="355.61" y2="355.61" stroke="#7fdcd4" stroke-width="0.5"/>
<line x1="680" x2="682.5" y1="358.22" y2="358.22" stroke="#7fdcd4" stroke-width="0.5"/>
<line x1="680" x2="682.5" y1="360.83" y2="360.83" stroke="#7fdcd4" stroke-width="0.5"/>
<line x1="680" x2="682.5" y1="363.44" y2="363.44" stroke="#7fdcd4" stroke-width="0.5"/>
<line x1="680" x2="682.5" y1="366.05" y2="366.05" stroke="#7fdcd4" stroke-width="0.5"/>
<line x1="680" x2="682.5" y1="368.66" y2="368.66" stroke="#7fdcd4" stroke-width="0.5"/>
<line x1="680" x2="682.5" y1="371.27" y2="371.27" stroke="#7fdcd4" stroke-width="0.5"/>
<line x1="680" x2="682.5" y1="373.88" y2="373.88" stroke="#7fdcd4" stroke-width="0.5"/>
<line x1="680" x2="682.5" y1="376.49" y2="376.49" stroke="#7fdcd4" stroke-width="0.5"/>
<line x1="680" x2="682.5" y1="379.10" y2="379.10" stroke="#7fdcd4" stroke-width="0.5"/>
<line x1="680" x2="682.5" y1="381.71" y2="381.71" stroke="#7fdcd4" stroke-width="0.5"/>
<line x1="680" x2="682.5" y1="384.32" y2="384.32" stroke="#7fdcd4" stroke-width="0.5"/>
<line x1="680" x2="682.5" y1="386.93" y2="386.93" stroke="#7fdcd4" stroke-width="0.5"/>
<line x1="680" x2="682.5" y1="389.54" y2="389.54" stroke="#7fdcd4" stroke-width="0.5"/>
<line x1="680" x2="682.5" y1="392.15" y2="392.15" stroke="#7fdcd4" stroke-width="0.5"/>
<line x1="680" x2="682.5" y1="394.76" y2="394.76" stroke="#7fdcd4" stroke-width="0.5"/>
<line x1="680" x2="682.5" y1="397.37" y2="397.37" stroke="#7fdcd4" stroke-width="0.5"/>
<line x1="680" x2="682.5" y1="399.98" y2="399.98" stroke="#7fdcd4" stroke-width="0.5"/>
<line x1="680" x2="682.5" y1="402.59" y2="402.59" stroke="#7fdcd4" stroke-width="0.5"/>
<line x1="64.88" x2="64.88" y1="409" y2="412" stroke="#9dbbe8" stroke-width="0.8"/>
<line x1="90.82" x2="90.82" y1="409" y2="412" stroke="#9dbbe8" stroke-width="0.8"/>
<line x1="116.78" x2="116.78" y1="409" y2="412" stroke="#9dbbe8" stroke-width="0.8"/>
<line x1="142.72" x2="142.72" y1="409" y2="412" stroke="#9dbbe8" stroke-width="0.8"/>
<line x1="168.67" x2="168.67" y1="409" y2="412" stroke="#9dbbe8" stroke-width="0.8"/>
<line x1="194.62" x2="194.62" y1="409" y2="412" stroke="#9dbbe8" stroke-width="0.8"/>
<line x1="220.57" x2="220.57" y1="409" y2="412" stroke="#9dbbe8" stroke-width="0.8"/>
<line x1="246.53" x2="246.53" y1="409" y2="412" stroke="#9dbbe8" stroke-width="0.8"/>
<line x1="272.47" x2="272.47" y1="409" y2="412" stroke="#9dbbe8" stroke-width="0.8"/>
<line x1="298.43" x2="298.43" y1="409" y2="412" stroke="#9dbbe8" stroke-width="0.8"/>
<line x1="324.37" x2="324.37" y1="409" y2="412" stroke="#9dbbe8" stroke-width="0.8"/>
<line x1="350.32" x2="350.32" y1="409" y2="412" stroke="#9dbbe8" stroke-width="0.8"/>
<line x1="376.27" x2="376.27" y1="409" y2="412" stroke="#9dbbe8" stroke-width="0.8"/>
<line x1="402.22" x2="402.22" y1="409" y2="412" stroke="#9dbbe8" stroke-width="0.8"/>
<line x1="428.17" x2="428.17" y1="409" y2="412" stroke="#9dbbe8" stroke-width="0.8"/>
<line x1="454.12" x2="454.12" y1="409" y2="412" stroke="#9dbbe8" stroke-width="0.8"/>
<line x1="480.07" x2="480.07" y1="409" y2="412" stroke="#9dbbe8" stroke-width="0.8"/>
<line x1="506.02" x2="506.02" y1="409" y2="412" stroke="#9dbbe8" stroke-width="0.8"/>
<line x1="531.98" x2="531.98" y1="409" y2="412" stroke="#9dbbe8" stroke-width="0.8"/>
<line x1="557.92" x2="557.92" y1="409" y2="412" stroke="#9dbbe8" stroke-width="0.8"/>
<line x1="583.88" x2="583.88" y1="409" y2="412" stroke="#9dbbe8" stroke-width="0.8"/>
<line x1="609.82" x2="609.82" y1="409" y2="412" stroke="#9dbbe8" stroke-width="0.8"/>
<line x1="635.77" x2="635.77" y1="409" y2="412" stroke="#9dbbe8" stroke-width="0.8"/>
<line x1="661.72" x2="661.72" y1="409" y2="412" stroke="#9dbbe8" stroke-width="0.8"/>
<line x1="51.90" x2="51.90" y1="409" y2="410.5" stroke="#b5ccee" stroke-width="0.5"/>
<line x1="57.09" x2="57.09" y1="409" y2="410.5" stroke="#b5ccee" stroke-width="0.5"/>
<line x1="62.28" x2="62.28" y1="409" y2="410.5" stroke="#b5ccee" stroke-width="0.5"/>
<line x1="67.47" x2="67.47" y1="409" y2="410.5" stroke="#b5ccee" stroke-width="0.5"/>
<line x1="72.66" x2="72.66" y1="409" y2="410.5" stroke="#b5ccee" stroke-width="0.5"/>
<line x1="77.85" x2="77.85" y1="409" y2="410.5" stroke="#b5ccee" stroke-width="0.5"/>
<line x1="83.04" x2="83.04" y1="409" y2="410.5" stroke="#b5ccee" stroke-width="0.5"/>
<line x1="88.23" x2="88.23" y1="409" y2="410.5" stroke="#b5ccee" stroke-width="0.5"/>
<line x1="93.42" x2="93.42" y1="409" y2="410.5" stroke="#b5ccee" stroke-width="0.5"/>
<line x1="98.61" x2="98.61" y1="409" y2="410.5" stroke="#b5ccee" stroke-width="0.5"/>
<line x1="103.80" x2="103.80" y1="409" y2="410.5" stroke="#b5ccee" stroke-width="0.5"/>
<line x1="108.99" x2="108.99" y1="409" y2="410.5" stroke="#b5ccee" stroke-width="0.5"/>
<line x1="114.18" x2="114.18" y1="409" y2="410.5" stroke="#b5ccee" stroke-width="0.5"/>
<line x1="119.37" x2="119.37" y1="409" y2="410.5" stroke="#b5ccee" stroke-width="0.5"/>
<line x1="124.56" x2="124.56" y1="409" y2="410.5" stroke="#b5ccee" stroke-width="0.5"/>
<line x1="129.75" x2="129.75" y1="409" y2="410.5" stroke="#b5ccee" stroke-width="0.5"/>
<line x1="134.94" x2="134.94" y1="409" y2="410.5" stroke="#b5ccee" stroke-width="0.5"/>
<line x1="140.13" x2="140.13" y1="409" y2="410.5" stroke="#b5ccee" stroke-width="0.5"/>
<line x1="145.32" x2="145.32" y1="409" y2="410.5" stroke="#b5ccee" stroke-width="0.5"/>
<line x1="150.51" x2="150.51" y1="409" y2="410.5" stroke="#b5ccee" stroke-width="0.5"/>
<line x1="155.70" x2="155.70" y1="409" y2="410.5" stroke="#b5ccee" stroke-width="0.5"/>
<line x1="160.89" x2="160.89" y1="409" y2="410.5" stroke="#b5ccee" stroke-width="0.5"/>
<line x1="166.08" x2="166.08" y1="409" y2="410.5" stroke="#b5ccee" stroke-width="0.5"/>
<line x1="171.27" x2="171.27" y1="409" y2="410.5" stroke="#b5ccee" stroke-width="0.5"/>
<line x1="176.46" x2="176.46" y1="409" y2="410.5" stroke="#b5ccee" stroke-width="0.5"/>
<line x1="181.65" x2="181.65" y1="409" y2="410.5" stroke="#b5ccee" stroke-width="0.5"/>
<line x1="186.84" x2="186.84" y1="409" y2="410.5" stroke="#b5ccee" stroke-width="0.5"/>
<line x1="192.03" x2="192.03" y1="409" y2="410.5" stroke="#b5ccee" stroke-width="0.5"/>
<line x1="197.22" x2="197.22" y1="409" y2="410.5" stroke="#b5ccee" stroke-width="0.5"/>
<line x1="202.41" x2="202.41" y1="409" y2="410.5" stroke="#b5ccee" stroke-width="0.5"/>
<line x1="207.60" x2="207.60" y1="409" y2="410.5" stroke="#b5ccee" stroke-width="0.5"/>
<line x1="212.79" x2="212.79" y1="409" y2="410.5" stroke="#b5ccee" stroke-width="0.5"/>
<line x1="217.98" x2="217.98" y1="409" y2="410.5" stroke="#b5ccee" stroke-width="0.5"/>
<line x1="223.17" x2="223.17" y1="409" y2="410.5" stroke="#b5ccee" stroke-width="0.5"/>
<line x1="228.36" x2="228.36" y1="409" y2="410.5" stroke="#b5ccee" stroke-width="0.5"/>
<line x1="233.55" x2="233.55" y1="409" y2="410.5" stroke="#b5ccee" stroke-width="0.5"/>
<line x1="238.74" x2="238.74" y1="409" y2="410.5" stroke="#b5ccee" stroke-width="0.5"/>
<line x1="243.93" x2="243.93" y1="409" y2="410.5" stroke="#b5ccee" stroke-width="0.5"/>
<line x1="249.12" x2="249.12" y1="409" y2="410.5" stroke="#b5ccee" stroke-width="0.5"/>
<line x1="254.31" x2="254.31" y1="409" y2="410.5" stroke="#b5ccee" stroke-width="0.5"/>
<line x1="259.50" x2="259.50" y1="409" y2="410.5" stroke="#b5ccee" stroke-width="0.5"/>
<line x1="264.69" x2="264.69" y1="409" y2="410.5" stroke="#b5ccee" stroke-width="0.5"/>
<line x1="269.88" x2="269.88" y1="409" y2="410.5" stroke="#b5ccee" stroke-width="0.5"/>
<line x1="275.07" x2="275.07" y1="409" y2="410.5" stroke="#b5ccee" stroke-width="0.5"/>
<line x1="280.26" x2="280.26" y1="409" y2="410.5" stroke="#b5ccee" stroke-width="0.5"/>
<line x1="285.45" x2="285.45" y1="409" y2="410.5" stroke="#b5ccee" stroke-width="0.5"/>
<line x1="290.64" x2="290.64" y1="409" y2="410.5" stroke="#b5ccee" stroke-width="0.5"/>
<line x1="295.83" x2="295.83" y1="409" y2="410.5" stroke="#b5ccee" stroke-width="0.5"/>
<line x1="301.02" x2="301.02" y1="409" y2="410.5" stroke="#b5ccee" stroke-width="0.5"/>
<line x1="306.21" x2="306.21" y1="409" y2="410.5" stroke="#b5ccee" stroke-width="0.5"/>
<line x1="311.40" x2="311.40" y1="409" y2="410.5" stroke="#b5ccee" stroke-width="0.5"/>
<line x1="316.59" x2="316.59" y1="409" y2="410.5" stroke="#b5ccee" stroke-width="0.5"/>
<line x1="321.78" x2="321.78" y1="409" y2="410.5" stroke="#b5ccee" stroke-width="0.5"/>
<line x1="326.97" x2="326.97" y1="409" y2="410.5" stroke="#b5ccee" stroke-width="0.5"/>
<line x1="332.16" x2="332.16" y1="409" y2="410.5" stroke="#b5ccee" stroke-width="0.5"/>
<line x1="337.35" x2="337.35" y1="409" y2="410.5" stroke="#b5ccee" stroke-width="0.5"/>
<line x1="342.54" x2="342.54" y1="409" y2="410.5" stroke="#b5ccee" stroke-width="0.5"/>
<line x1="347.73" x2="347.73" y1="409" y2="410.5" stroke="#b5ccee" stroke-width="0.5"/>
<line x1="352.92" x2="352.92" y1="409" y2="410.5" stroke="#b5ccee" stroke-width="0.5"/>
<line x1="358.11" x2="358.11" y1="409" y2="410.5" stroke="#b5ccee" stroke-width="0.5"/>
<line x1="363.30" x2="363.30" y1="409" y2="410.5" stroke="#b5ccee" stroke-width="0.5"/>
<line x1="368.49" x2="368.49" y1="409" y2="410.5" stroke="#b5ccee" stroke-width="0.5"/>
<line x1="373.68" x2="373.68" y1="409" y2="410.5" stroke="#b5ccee" stroke-width="0.5"/>
<line x1="378.87" x2="378.87" y1="409" y2="410.5" stroke="#b5ccee" stroke-width="0.5"/>
<line x1="384.06" x2="384.06" y1="409" y2="410.5" stroke="#b5ccee" stroke-width="0.5"/>
<line x1="389.25" x2="389.25" y1="409" y2="410.5" stroke="#b5ccee" stroke-width="0.5"/>
<line x1="394.44" x2="394.44" y1="409" y2="410.5" stroke="#b5ccee" stroke-width="0.5"/>
<line x1="399.63" x2="399.63" y1="409" y2="410.5" stroke="#b5ccee" stroke-width="0.5"/>
<line x1="404.82" x2="404.82" y1="409" y2="410.5" stroke="#b5ccee" stroke-width="0.5"/>
<line x1="410.01" x2="410.01" y1="409" y2="410.5" stroke="#b5ccee" stroke-width="0.5"/>
<line x1="415.20" x2="415.20" y1="409" y2="410.5" stroke="#b5ccee" stroke-width="0.5"/>
<line x1="420.39" x2="420.39" y1="409" y2="410.5" stroke="#b5ccee" stroke-width="0.5"/>
<line x1="425.58" x2="425.58" y1="409" y2="410.5" stroke="#b5ccee" stroke-width="0.5"/>
<line x1="430.77" x2="430.77" y1="409" y2="410.5" stroke="#b5ccee" stroke-width="0.5"/>
<line x1="435.96" x2="435.96" y1="409" y2="410.5" stroke="#b5ccee" stroke-width="0.5"/>
<line x1="441.15" x2="441.15" y1="409" y2="410.5" stroke="#b5ccee" stroke-width="0.5"/>
<line x1="446.34" x2="446.34" y1="409" y2="410.5" stroke="#b5ccee" stroke-width="0.5"/>
<line x1="451.53" x2="451.53" y1="409" y2="410.5" stroke="#b5ccee" stroke-width="0.5"/>
<line x1="456.72" x2="456.72" y1="409" y2="410.5" stroke="#b5ccee" stroke-width="0.5"/>
<line x1="461.91" x2="461.91" y1="409" y2="410.5" stroke="#b5ccee" stroke-width="0.5"/>
<line x1="467.10" x2="467.10" y1="409" y2="410.5" stroke="#b5ccee" stroke-width="0.5"/>
<line x1="472.29" x2="472.29" y1="409" y2="410.5" stroke="#b5ccee" stroke-width="0.5"/>
<line x1="477.48" x2="477.48" y1="409" y2="410.5" stroke="#b5ccee" stroke-width="0.5"/>
<line x1="482.67" x2="482.67" y1="409" y2="410.5" stroke="#b5ccee" stroke-width="0.5"/>
<line x1="487.86" x2="487.86" y1="409" y2="410.5" stroke="#b5ccee" stroke-width="0.5"/>
<line x1="493.05" x2="493.05" y1="409" y2="410.5" stroke="#b5ccee" stroke-width="0.5"/>
<line x1="498.24" x2="498.24" y1="409" y2="410.5" stroke="#b5ccee" stroke-width="0.5"/>
<line x1="503.43" x2="503.43" y1="409" y2="410.5" stroke="#b5ccee" stroke-width="0.5"/>
<line x1="508.62" x2="508.62" y1="409" y2="410.5" stroke="#b5ccee" stroke-width="0.5"/>
<line x1="513.81" x2="513.81" y1="409" y2="410.5" stroke="#b5ccee" stroke-width="0.5"/>
<line x1="519.00" x2="519.00" y1="409" y2="410.5" stroke="#b5ccee" stroke-width="0.5"/>
<line x1="524.19" x2="524.19" y1="409" y2="410.5" stroke="#b5ccee" stroke-width="0.5"/>
<line x1="529.38" x2="529.38" y1="409" y2="410.5" stroke="#b5ccee" stroke-width="0.5"/>
<line x1="534.57" x2="534.57" y1="409" y2="410.5" stroke="#b5ccee" stroke-width="0.5"/>
<line x1="539.76" x2="539.76" y1="409" y2="410.5" stroke="#b5ccee" stroke-width="0.5"/>
<line x1="544.95" x2="544.95" y1="409" y2="410.5" stroke="#b5ccee" stroke-width="0.5"/>
<line x1="550.14" x2="550.14" y1="409" y2="410.5" stroke="#b5ccee" stroke-width="0.5"/>
<line x1="555.33" x2="555.33" y1="409" y2="410.5" stroke="#b5ccee" stroke-width="0.5"/>
<line x1="560.52" x2="560.52" y1="409" y2="410.5" stroke="#b5ccee" stroke-width="0.5"/>
<line x1="565.71" x2="565.71" y1="409" y2="410.5" stroke="#b5ccee" stroke-width="0.5"/>
<line x1="570.90" x2="570.90" y1="409" y2="410.5" stroke="#b5ccee" stroke-width="0.5"/>
<line x1="576.09" x2="576.09" y1="409" y2="410.5" stroke="#b5ccee" stroke-width="0.5"/>
<line x1="581.28" x2="581.28" y1="409" y2="410.5" stroke="#b5ccee" stroke-width="0.5"/>
<line x1="586.47" x2="586.47" y1="409" y2="410.5" stroke="#b5ccee" stroke-width="0.5"/>
<line x1="591.66" x2="591.66" y1="409" y2="410.5" stroke="#b5ccee" stroke-width="0.5"/>
<line x1="596.85" x2="596.85" y1="409" y2="410.5" stroke="#b5ccee" stroke-width="0.5"/>
<line x1="602.04" x2="602.04" y1="409" y2="410.5" stroke="#b5ccee" stroke-width="0.5"/>
<line x1="607.23" x2="607.23" y1="409" y2="410.5" stroke="#b5ccee" stroke-width="0.5"/>
<line x1="612.42" x2="612.42" y1="409" y2="410.5" stroke="#b5ccee" stroke-width="0.5"/>
<line x1="617.61" x2="617.61" y1="409" y2="410.5" stroke="#b5ccee" stroke-width="0.5"/>
<line x1="622.80" x2="622.80" y1="409" y2="410.5" stroke="#b5ccee" stroke-width="0.5"/>
<line x1="627.99" x2="627.99" y1="409" y2="410.5" stroke="#b5ccee" stroke-width="0.5"/>
<line x1="633.18" x2="633.18" y1="409" y2="410.5" stroke="#b5ccee" stroke-width="0.5"/>
<line x1="638.37" x2="638.37" y1="409" y2="410.5" stroke="#b5ccee" stroke-width="0.5"/>
<line x1="643.56" x2="643.56" y1="409" y2="410.5" stroke="#b5ccee" stroke-width="0.5"/>
<line x1="648.75" x2="648.75" y1="409" y2="410.5" stroke="#b5ccee" stroke-width="0.5"/>
<line x1="653.94" x2="653.94" y1="409" y2="410.5" stroke="#b5ccee" stroke-width="0.5"/>
<line x1="659.13" x2="659.13" y1="409" y2="410.5" stroke="#b5ccee" stroke-width="0.5"/>
<line x1="664.32" x2="664.32" y1="409" y2="410.5" stroke="#b5ccee" stroke-width="0.5"/>
<line x1="669.51" x2="669.51" y1="409" y2="410.5" stroke="#b5ccee" stroke-width="0.5"/>
<line x1="674.70" x2="674.70" y1="409" y2="410.5" stroke="#b5ccee" stroke-width="0.5"/>
</svg>
<div class="yl" style="top:94.9px">1 800</div>
<div class="yl" style="top:118.5px">1 700</div>
<div class="yl" style="top:142.1px">1 600</div>
<div class="yl" style="top:165.6px">1 500</div>
<div class="yl" style="top:189.2px">1 400</div>
<div class="yl" style="top:212.8px">1 300</div>
<div class="yl" style="top:236.4px">1 200</div>
<div class="yl" style="top:260.0px">1 100</div>
<div class="yl" style="top:283.5px">1 000</div>
<div class="yl" style="top:307.1px">900</div>
<div class="yl" style="top:330.7px">800</div>
<div class="yl" style="top:354.3px">700</div>
<div class="yl" style="top:377.9px">600</div>
<div class="yl" style="top:401.4px">500</div>
<div class="yr" style="top:86.1px">120 000</div>
<div class="yr" style="top:99.1px">115 000</div>
<div class="yr" style="top:112.2px">110 000</div>
<div class="yr" style="top:125.2px">105 000</div>
<div class="yr" style="top:138.3px">100 000</div>
<div class="yr" style="top:151.3px">95 000</div>
<div class="yr" style="top:164.4px">90 000</div>
<div class="yr" style="top:177.4px">85 000</div>
<div class="yr" style="top:190.5px">80 000</div>
<div class="yr" style="top:203.6px">75 000</div>
<div class="yr" style="top:216.6px">70 000</div>
<div class="yr" style="top:229.7px">65 000</div>
<div class="yr" style="top:242.7px">60 000</div>
<div class="yr" style="top:255.8px">55 000</div>
<div class="yr" style="top:268.8px">50 000</div>
<div class="yr" style="top:281.9px">45 000</div>
<div class="yr" style="top:294.9px">40 000</div>
<div class="yr" style="top:308.0px">35 000</div>
<div class="yr" style="top:321.0px">30 000</div>
<div class="yr" style="top:334.1px">25 000</div>
<div class="yr" style="top:347.1px">20 000</div>
<div class="yr" style="top:360.1px">15 000</div>
<div class="yr" style="top:373.2px">10 000</div>
<div class="yr" style="top:386.2px">5 000</div>
<div class="yr" style="top:399.3px">0</div>
<div class="xl" style="left:49.9px">0-1</div>
<div class="xl" style="left:75.8px">1-2</div>
<div class="xl" style="left:101.8px">2-3</div>
<div class="xl" style="left:127.7px">3-4</div>
<div class="xl" style="left:153.7px">4-5</div>
<div class="xl" style="left:179.6px">5-6</div>
<div class="xl" style="left:205.6px">6-7</div>
<div class="xl" style="left:231.5px">7-8</div>
<div class="xl" style="left:257.5px">8-9</div>
<div class="xl" style="left:283.4px">9-10</div>
<div class="xl" style="left:309.4px">10-11</div>
<div class="xl" style="left:335.3px">11-12</div>
<div class="xl" style="left:361.3px">12-13</div>
<div class="xl" style="left:387.2px">13-14</div>
<div class="xl" style="left:439.1px">15-16</div>
<div class="xl" style="left:465.1px">16-17</div>
<div class="xl" style="left:517.0px">18-19</div>
<div class="xl" style="left:542.9px">19-20</div>
<!-- legend -->
<div class="lg" style="left:45.5px;width:76px;box-shadow:2px 2px 0 #4fe06a;padding-left:2px">Мин ИРЦ продажа</div>
<div class="lg" style="left:126px;width:80.5px;background:#90e29c;box-shadow:2px 2px 0 #f0a860">Макс ИРЦ продажа</div>
<div class="lg" style="left:210.5px;width:59.5px;box-shadow:1.7px 1.7px 0 #303038">ИРЦ продажа</div>
<div class="lg" style="left:273.5px;width:54.5px;box-shadow:1.7px 1.7px 0 #4aa8a4">Продажа РД</div>
<div class="lg" style="left:332px;width:58.5px;box-shadow:1.7px 1.7px 0 #74dcdc">Продажа РСВ</div>
<!-- small icon -->
<svg style="position:absolute;left:671.500px;top:86px" width="8" height="8" viewBox="0 0 8 8"><rect x="0.400" y="0.400" width="7.200" height="7.200" fill="#8fb0e4" stroke="#6f92d0" stroke-width="0.800"/><path d="M2 2l4 4M6 2L2 6" stroke="#e8f0fc" stroke-width="1"/></svg>
<!-- splitter -->
<svg style="position:absolute;left:724px;top:244px" width="3" height="16" viewBox="0 0 3 16"><g fill="#5f86cc"><rect x="0.800" y="1" width="1.200" height="1.200"/><rect x="0.800" y="4" width="1.200" height="1.200"/><rect x="0.800" y="7" width="1.200" height="1.200"/><rect x="0.800" y="10" width="1.200" height="1.200"/><rect x="0.800" y="13" width="1.200" height="1.200"/></g></svg>
<!-- table -->
<div id="tblwrap"></div>
<div class="tr" style="top:93.3px"><div class="c1"><span>2.2010 0:00:00</span></div><div class="c2">1733,5</div></div>
<div class="tr" style="top:107.9px"><div class="c1"><span>2.2010 1:00:00</span></div><div class="c2">1063,48</div></div>
<div class="tr" style="top:122.4px"><div class="c1"><span>2.2010 2:00:00</span></div><div class="c2">1064,7</div></div>
<div class="tr" style="top:137.0px"><div class="c1"><span>2.2010 3:00:00</span></div><div class="c2">983,86</div></div>
<div class="tr" style="top:151.5px"><div class="c1"><span>2.2010 4:00:00</span></div><div class="c2">1004,96</div></div>
<div class="tr" style="top:166.1px"><div class="c1"><span>2.2010 5:00:00</span></div><div class="c2">1128,52</div></div>
<div class="tr" style="top:180.7px"><div class="c1"><span>2.2010 6:00:00</span></div><div class="c2">1168,09</div></div>
<div class="tr" style="top:195.2px"><div class="c1"><span>2.2010 7:00:00</span></div><div class="c2">1479,92</div></div>
<div class="tr" style="top:209.8px"><div class="c1"><span>2.2010 8:00:00</span></div><div class="c2">1511,35</div></div>
<div class="tr" style="top:224.3px"><div class="c1"><span>2.2010 9:00:00</span></div><div class="c2">1516,95</div></div>
<div class="tr" style="top:238.9px"><div class="c1"><span>2.2010 10:00:00</span></div><div class="c2">1534,76</div></div>
<div class="tr" style="top:253.5px"><div class="c1"><span>2.2010 11:00:00</span></div><div class="c2">1514,48</div></div>
<div class="tr" style="top:268.0px"><div class="c1"><span>2.2010 12:00:00</span></div><div class="c2">1509,09</div></div>
<div class="tr" style="top:282.6px"><div class="c1"><span>2.2010 13:00:00</span></div><div class="c2">1459,34</div></div>
<div class="tr" style="top:297.1px"><div class="c1"><span>2.2010 14:00:00</span></div><div class="c2">1465,74</div></div>
<div class="tr" style="top:311.7px"><div class="c1"><span>2.2010 15:00:00</span></div><div class="c2">1415,36</div></div>
<div class="tr" style="top:326.3px"><div class="c1"><span>2.2010 16:00:00</span></div><div class="c2">1424,69</div></div>
<div class="tr" style="top:340.8px"><div class="c1"><span>2.2010 17:00:00</span></div><div class="c2">1355</div></div>
<div class="tr" style="top:355.4px"><div class="c1"><span>2.2010 18:00:00</span></div><div class="c2">1353,8</div></div>
<div class="tr" style="top:369.9px"><div class="c1"><span>2.2010 19:00:00</span></div><div class="c2">1547,49</div></div>
<div class="tr" style="top:384.5px"><div class="c1"><span>2.2010 20:00:00</span></div><div class="c2">1476,31</div></div>
<div class="tr" style="top:399.1px"><div class="c1"><span>2.2010 21:00:00</span></div><div class="c2">1740,02</div></div>
<div class="tr" style="top:413.6px"><div class="c1"><span>2.2010 22:00:00</span></div><div class="c2">1730,5</div></div>
<div style="left:726px;top:79.500px;width:117px;height:14px;background:linear-gradient(#f7fafe,#dfe9f9);border:1px solid #a8c0e6;"></div>
<div style="left:783.500px;top:80px;width:1px;height:344px;background:#e3e9f3"></div>
<div style="left:783.500px;top:80px;width:1px;height:13px;background:#a8c0e6"></div>
<div style="left:727px;top:82px;width:54.500px;text-align:right;font-size:8px;line-height:10px;color:#101018">Дата</div>
<div style="left:787.500px;top:82px;font-size:8.3px;line-height:10px;color:#101018">Первая цен...</div>
<!-- scrollbar -->
<div style="left:843.500px;top:80px;width:13.3px;height:344px;background:#7d9fd6"></div>
<div style="left:844px;top:80px;width:12.5px;height:12px;background:linear-gradient(90deg,#86a6da,#7495cf)"></div>
<svg style="position:absolute;left:846px;top:83px" width="8" height="5" viewBox="0 0 8 5"><path d="M0.500 4.500l3.500-3.500 3.500 3.500z" fill="#4a6aa8"/></svg>
<div style="left:844.500px;top:93px;width:11.5px;height:286px;border:1px solid #6f88b8;border-radius:1.500px;background:linear-gradient(90deg,#c2cfe6,#e6edf8 50%,#d3deef)"></div>
<svg style="position:absolute;left:846.500px;top:231px" width="7" height="7" viewBox="0 0 7 7"><rect x="0.500" y="0.500" width="6" height="6" fill="#a9b9d6" stroke="#7f92b8" stroke-width="0.600"/></svg>
<svg style="position:absolute;left:846px;top:415px" width="8" height="5" viewBox="0 0 8 5"><path d="M0.500 0.500l3.500 3.500 3.500-3.500z" fill="#3f5f9c"/></svg>
<!-- bottom tab band -->
<div style="left:3px;top:425px;width:854px;height:16.5px;background:linear-gradient(#a9c3ea,#b3cbef);"></div>
<div style="left:5px;top:425.3px;width:83.6px;height:13.6px;background:linear-gradient(#c4d8f6,#b7cff2);border:1px solid #8fb0e4;border-top:none"></div>
<div style="left:8.2px;top:429.3px;font-size:8px;line-height:10px;color:#1c2f66">1 цз График покупка</div>
<div style="left:88.6px;top:425.3px;width:87.8px;height:13.6px;background:#f1f6fd;border:1px solid #b8cdee;border-top:none"></div>
<div style="left:92.6px;top:429.3px;font-size:8px;line-height:10px;color:#101820">1 цз График продажа</div>
<!-- bottom toolbar -->
<div style="left:0;top:445.3px;width:860px;height:22px;background:linear-gradient(#c3dafa 0%,#bdd6f8 50%,#b9d3f7 100%)"></div>
<div style="left:3.5px;top:445.5px;width:35px;height:19.5px;background:linear-gradient(#e0ebfc,#cfdff8 50%,#c3d8f6);border-bottom:1px solid #8eaede;border-radius:0 0 2px 2px"></div>
<svg style="position:absolute;left:4px;top:446px" width="30" height="18" viewBox="0 0 30 18"><defs><radialGradient id="gg" cx="0.400" cy="0.350" r="0.700"><stop offset="0" stop-color="#9af08a"/><stop offset="0.500" stop-color="#3fc83a"/><stop offset="1" stop-color="#1f8a22"/></radialGradient></defs><g fill="#7f9ccc"><rect x="0.500" y="4" width="1.200" height="1.200"/><rect x="0.500" y="7" width="1.200" height="1.200"/><rect x="0.500" y="10" width="1.200" height="1.200"/><rect x="0.500" y="13" width="1.200" height="1.200"/></g><circle cx="19" cy="8.700" r="5.600" fill="url(#gg)"/></svg>
<div style="left:329px;top:445.5px;width:531px;height:19.5px;background:linear-gradient(#e0ebfc,#cfdff8 50%,#c3d8f6);border-bottom:1px solid #8eaede;border-radius:0 0 0 2px"></div>
<svg style="position:absolute;left:329px;top:444px" width="32" height="22" viewBox="0 0 32 22"><g fill="#7f9ccc"><rect x="3" y="5" width="1.200" height="1.200"/><rect x="3" y="8" width="1.200" height="1.200"/><rect x="3" y="11" width="1.200" height="1.200"/><rect x="3" y="14" width="1.200" height="1.200"/></g><rect x="11.500" y="5" width="11.500" height="12" fill="#f6e7b4" stroke="#c49a3a" stroke-width="0.900"/><rect x="12.500" y="6" width="9.500" height="2.500" fill="#fbf4d8"/><g fill="#d8a02a"><rect x="14" y="11" width="2" height="5"/><rect x="17" y="9" width="2" height="7"/><rect x="20" y="12" width="1.500" height="4"/></g><path d="M28.500 3.500v15" stroke="#a9c2ea" stroke-width="1"/></svg>
<div class="combo" style="left:363px;width:101.500px"><span style="font-size:8px">Операционные сутки</span><i></i></div>
<div class="lbl" style="left:468.500px">с даты</div>
<div class="combo" style="left:498.500px;width:60.500px"><span>02.02.2010</span><i></i></div>
<div class="lbl" style="left:563.500px">по дату</div>
<div class="combo" style="left:597.500px;width:62.500px"><span>02.02.2010</span><i></i></div>
<div class="combo" style="left:666.500px;width:48.500px"><span>Час</span><i></i></div>
<svg style="position:absolute;left:720px;top:446px" width="18" height="18" viewBox="0 0 18 18"><path d="M3.500 13.500l2.500-5 5-2.500 3 3-3.500 3.500-4 2z" fill="#f1e480" stroke="#d8c860" stroke-width="0.500"/><path d="M9 4.800l3-1.800.5 1.200 2 .3-1.500 1.500-2.500-.2z" fill="#3a4a6a"/></svg>
<div class="lbl" style="left:736.6px;color:#0c1018;font-size:8.2px">Загрузить</div>
<div style="left:780.7px;top:447px;width:1px;height:15px;background:#b4c9ec"></div>
<svg style="position:absolute;left:784px;top:444px" width="76" height="23" viewBox="0 0 76 23">
<path d="M3 15.500l3.500-4 2 2.500 4.500-6.500" stroke="#e0483a" stroke-width="1" fill="none"/><path d="M3 12l3 2 3-3 3.500 1" stroke="#f0a090" stroke-width="0.700" fill="none"/>
<rect x="17.400" y="3.300" width="15.300" height="15.400" fill="#5f84c8"/><rect x="18.800" y="5" width="12.500" height="12.500" fill="#eef2fa"/>
<path d="M19.500 11l3-3 2.500 2 4.500-4.500" stroke="#f0624a" stroke-width="1" fill="none"/><g fill="#f2c24a"><rect x="22.500" y="11" width="1.800" height="6"/><rect x="25" y="10" width="1.800" height="7"/><rect x="27.500" y="11" width="1.800" height="6"/><rect x="29.800" y="10.500" width="1.500" height="6.500"/></g>
<path d="M42.500 5.500v11.500M38.500 11.500h10" stroke="#ecc06a" stroke-width="1"/><path d="M45 13v4M45.300 15.200l2.200-2.200M45.300 15l2.400 2.200" stroke="#55657f" stroke-width="0.800" fill="none"/>
<path d="M54.500 3v16" stroke="#a9c2ea" stroke-width="1"/>
<circle cx="61.300" cy="8" r="1.900" fill="#f0b42a"/><rect x="60.700" y="9" width="1.300" height="7.500" fill="#dda21e"/><path d="M66.300 6.500h3.400M66.300 16.500h3.400M68 6.500v10" stroke="#55657f" stroke-width="1"/>
</svg>
<!-- tooltip -->
<div style="left:591.2px;top:408.5px;width:225.8px;height:39.3px;background:rgba(50,60,85,0.6);border-radius:3px;filter:blur(0.7px)"></div>
<div style="left:589.7px;top:407px;width:226px;height:39.7px;border:1px solid #7a7f8c;border-radius:2.500px;background:linear-gradient(#ffffff 0%,#f0f3fa 40%,#d6deef 100%)"></div>
<div style="left:595px;top:411px;font-size:8.300px;line-height:10px;font-weight:bold;color:#3a3a3a">Таблица</div>
<div style="left:598.500px;top:426px;font-size:8px;line-height:10px;color:#555a64">Показать таблицу с исходными данными для построения</div>
<div style="left:598.500px;top:435.500px;font-size:8px;line-height:10px;color:#555a64">графика.</div>
<svg style="position:absolute;left:784px;top:444px" width="76" height="23" viewBox="0 0 76 23"><rect x="15.400" y="1.400" width="18.700" height="19.700" rx="3" fill="none" stroke="#e3101c" stroke-width="2.800"/></svg>
</div>
</body></html>
